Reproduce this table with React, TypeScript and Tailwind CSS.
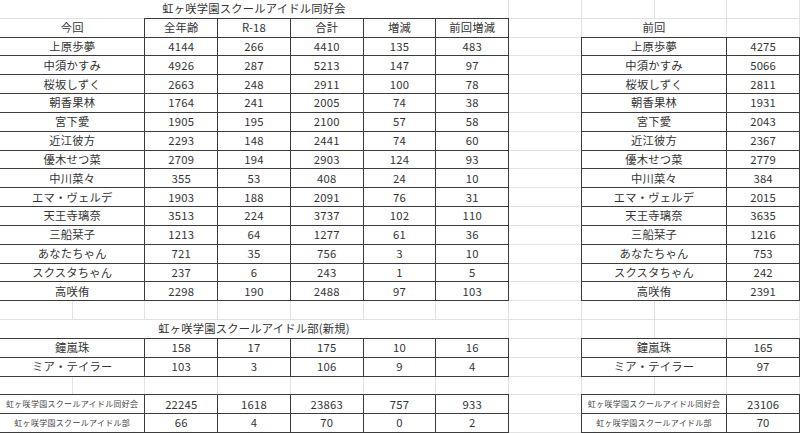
import React from 'react';

type Cell = { span: number; text?: string; box?: boolean; small?: boolean };

const current = [
    ['上原歩夢', 4144, 266, 4410, 135, 483],
    ['中須かすみ', 4926, 287, 5213, 147, 97],
    ['桜坂しずく', 2663, 248, 2911, 100, 78],
    ['朝香果林', 1764, 241, 2005, 74, 38],
    ['宮下愛', 1905, 195, 2100, 57, 58],
    ['近江彼方', 2293, 148, 2441, 74, 60],
    ['優木せつ菜', 2709, 194, 2903, 124, 93],
    ['中川菜々', 355, 53, 408, 24, 10],
    ['エマ・ヴェルデ', 1903, 188, 2091, 76, 31],
    ['天王寺璃奈', 3513, 224, 3737, 102, 110],
    ['三船栞子', 1213, 64, 1277, 61, 36],
    ['あなたちゃん', 721, 35, 756, 3, 10],
    ['スクスタちゃん', 237, 6, 243, 1, 5],
    ['高咲侑', 2298, 190, 2488, 97, 103],
];

const previous = [4275, 5066, 2811, 1931, 2043, 2367, 2779, 384, 2015, 3635, 1216, 753, 242, 2391];

const newcomers = [
    ['鐘嵐珠', 158, 17, 175, 10, 16, 165],
    ['ミア・テイラー', 103, 3, 106, 9, 4, 97],
];

const totals = [
    ['虹ヶ咲学園スクールアイドル同好会', 22245, 1618, 23863, 757, 933, 23106],
    ['虹ヶ咲学園スクールアイドル部', 66, 4, 70, 0, 2, 70],
];

const spans: Record<number, string> = {
    1: 'col-span-1',
    2: 'col-span-2',
    7: 'col-span-7',
};

const emptyRow = (): Cell[] => Array.from({ length: 11 }, () => ({ span: 1 }));

function dataRow(name: string, vals: (string | number)[], prev: number, small = false): Cell[] {
    return [
        { span: 2, text: name, box: true, small },
        ...vals.map((v) => ({ span: 1, text: String(v), box: true })),
        { span: 1 },
        { span: 2, text: name, box: true, small },
        { span: 1, text: String(prev), box: true },
    ];
}

function buildRows(): Cell[][] {
    const rows: Cell[][] = [];
    rows.push([{ span: 7, text: '虹ヶ咲学園スクールアイドル同好会' }, { span: 1 }, { span: 1 }, { span: 1 }, { span: 1 }]);
    rows.push([
        { span: 2, text: '今回' },
        ...['全年齢', 'R-18', '合計', '増減', '前回増減'].map((t) => ({ span: 1, text: t, box: true })),
        { span: 1 },
        { span: 2, text: '前回' },
        { span: 1 },
    ]);
    current.forEach((r, i) => rows.push(dataRow(r[0] as string, r.slice(1), previous[i])));
    rows.push(emptyRow());
    rows.push([{ span: 7, text: '虹ヶ咲学園スクールアイドル部(新規)' }, { span: 1 }, { span: 1 }, { span: 1 }, { span: 1 }]);
    newcomers.forEach((r) => rows.push(dataRow(r[0] as string, r.slice(1, 6), r[6] as number)));
    rows.push(emptyRow());
    totals.forEach((r) => rows.push(dataRow(r[0] as string, r.slice(1, 6), r[6] as number, true)));
    return rows;
}

export default function App() {
    const rows = buildRows();

    return (
        <div className="w-[800px] h-[433px] overflow-hidden bg-white font-['Noto_Sans_CJK_JP','Noto_Sans',sans-serif] text-[#333333]">
            <div className="grid grid-cols-11 grid-rows-[repeat(23,18.83px)]">
                {rows.map((row, r) =>
                    row.map((cell, i) => (
                        <div
                            key={`${r}-${i}`}
                            className={`${spans[cell.span]} flex items-center justify-center whitespace-nowrap overflow-visible leading-none border-r border-b ${
                                cell.box
                                    ? 'border-[#3c3c3c] shadow-[0_-1px_0_#3c3c3c,-1px_0_0_#3c3c3c,-1px_-1px_0_#3c3c3c]'
                                    : 'border-[#e2e2e2]'
                            } ${cell.small ? 'text-[8px] tracking-[0.3px] text-[#444444]' : 'text-[11.3px] tracking-[0.2px]'}`}
                        >
                            {cell.text}
                        </div>
                    ))
                )}
            </div>
        </div>
    );
}
